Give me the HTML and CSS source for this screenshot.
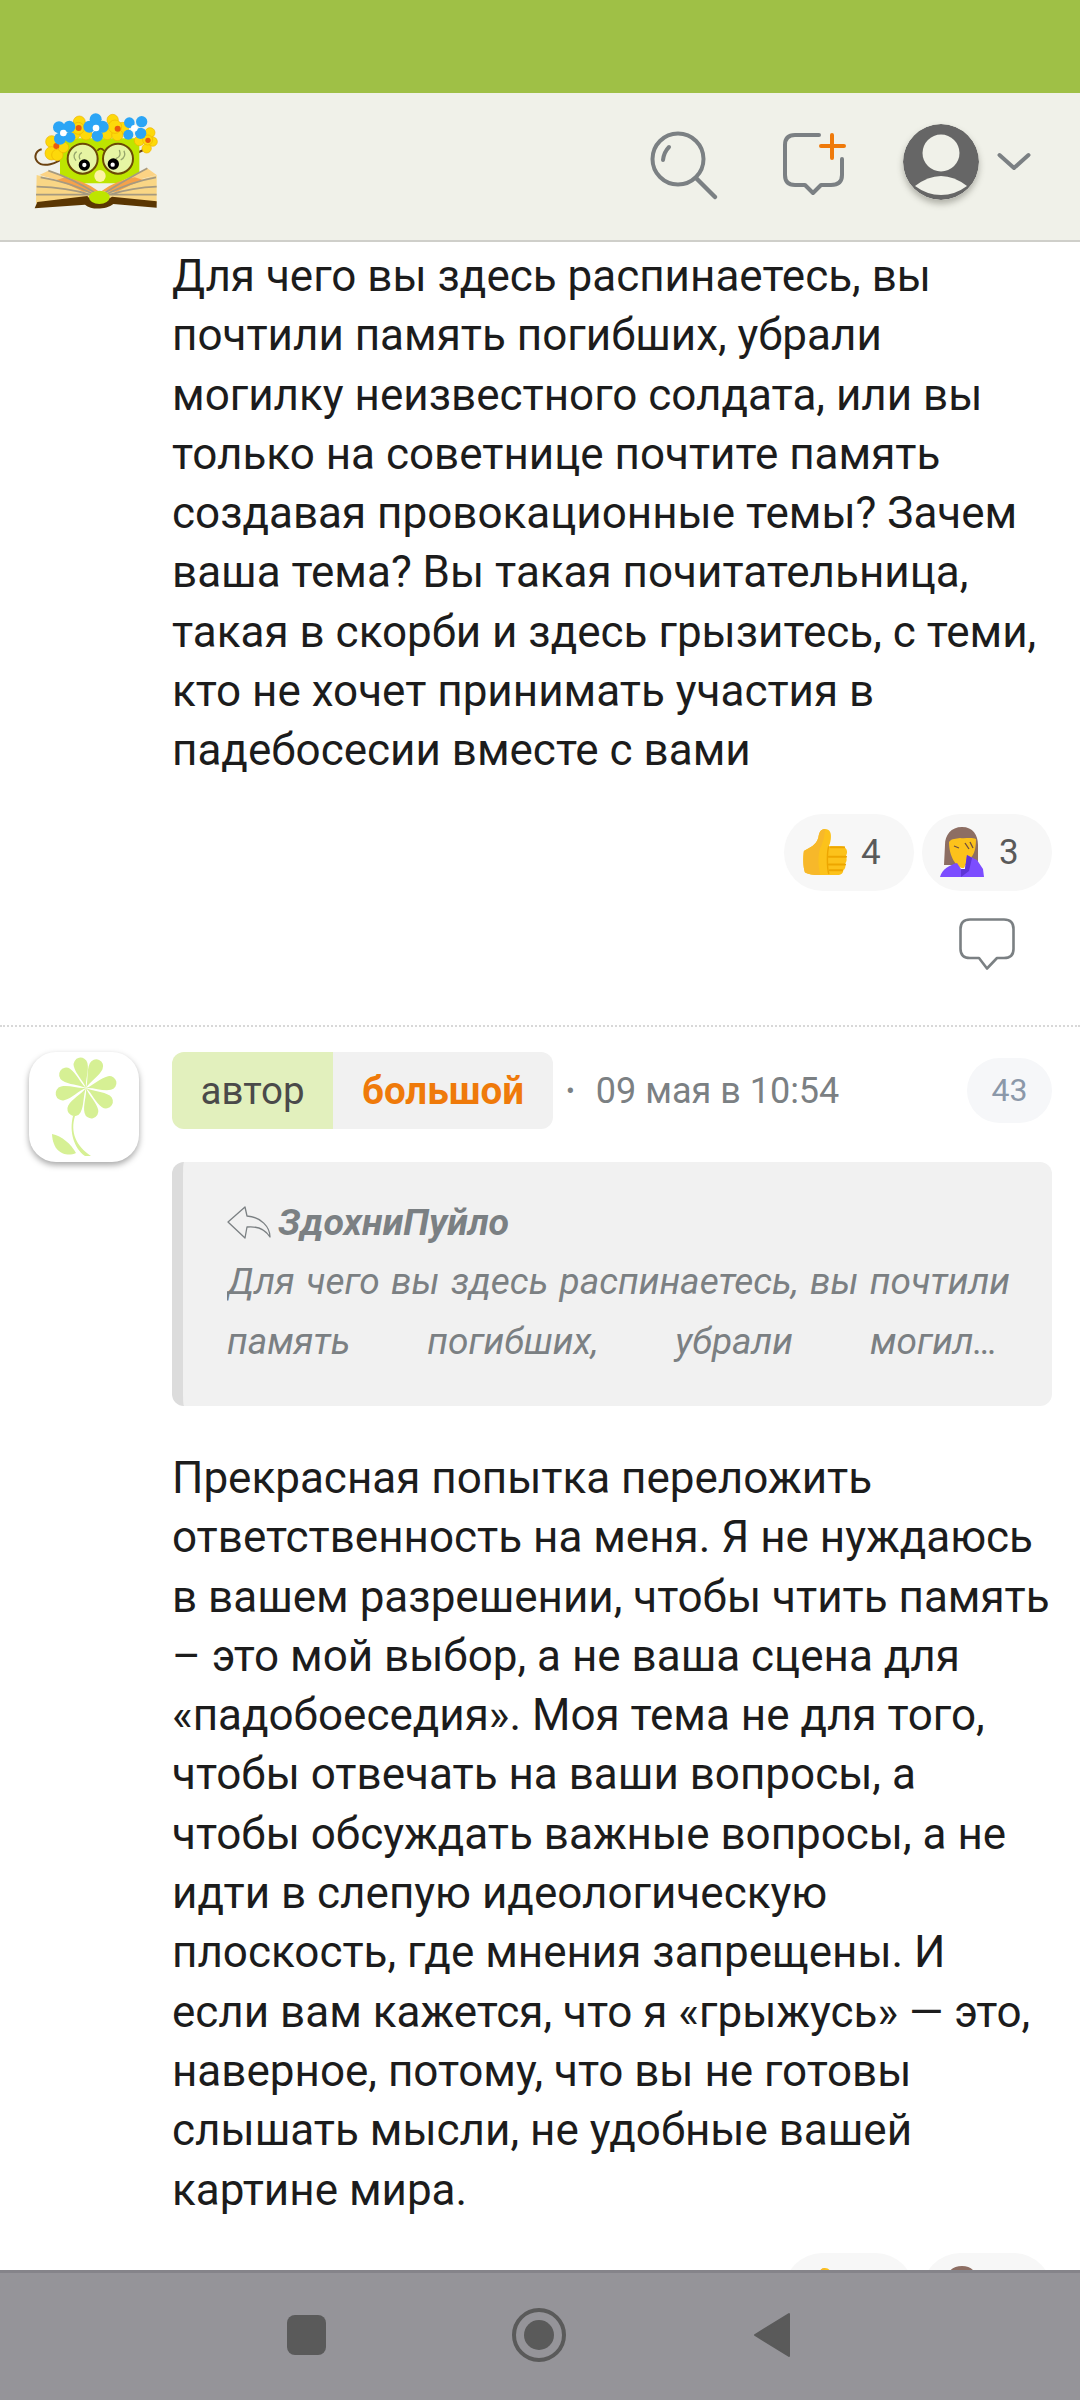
FILE: index.html
```html
<!DOCTYPE html>
<html lang="ru">
<head>
<meta charset="utf-8">
<title>Комментарии</title>
<link rel="stylesheet" href="styles.css">
</head>
<body>
<svg class="defs" width="0" height="0" aria-hidden="true">
  <defs>
    <symbol id="thumb" viewBox="0 0 48 50">
      <path d="M2 24C8 20 15 18 17 10C18 5 19 1 24 1C29 1 31 5 30 12C29.500 15 29 17 28 19L38 19C44 19 47 21 47 25C47 27 46 29 45.500 29.500C47 31 47 35 45 37C46 40 45 43 43 44C43 47 41 49 37 49L20 49C12 49 6 48 3 46C1 40 1 30 2 24Z" fill="#fcc21b"/>
      <path d="M2 24C8 20 15 18 17 10C18 5 19 1 24 1C24 8 22 14 20 19C17 24 16 36 19 49C12 49 6 48 3 46C1 40 1 30 2 24Z" fill="#f7b82a"/>
      <path d="M30 20H44M28 30H46M28 38H45M29 44H42" stroke="#eda600" stroke-width="2" stroke-linecap="round" fill="none"/>
      <path d="M28 19C26 24 26 42 28 48" stroke="#eda600" stroke-width="1.500" fill="none"/>
    </symbol>
    <symbol id="facepalm" viewBox="0 0 46 50">
      <path d="M22 0C11 0 5 8 5 18L4 38H38L38 18C38 8 33 0 22 0Z" fill="#8d6e63"/>
      <path d="M9 15C12 11 16 12 20 11C25 12 31 10 36 12C36 24 33 30 28 33L24 41C17 42 9 30 9 15Z" fill="#fcc21b"/>
      <path d="M14 19L19 21M25 16L29 22M30 15L33 21" stroke="#6d4c41" stroke-width="1.300" fill="none"/>
      <path d="M0 50C2 42 10 38 17 36L21 42L25 42L27 28L37 33L43 42L44 50Z" fill="#7c4dff"/>
      <path d="M21 42L25 42L27 28L32 31L29 44L21 50Z" fill="#5e35d6"/>
    </symbol>
    <symbol id="bubble" viewBox="0 0 56 52">
      <path d="M11 1.500H45Q54.500 1.500 54.500 11V31Q54.500 40 45 40H38L28 50.500L20 40H11Q1.500 40 1.500 31V11Q1.500 1.500 11 1.500Z" fill="none" stroke="#7b8083" stroke-width="2.600" stroke-linejoin="round"/>
    </symbol>
  </defs>
</svg>

<div class="status-bar"></div>

<header class="topbar">
  <svg class="logo" viewBox="90 150 390 300" aria-label="Логотип">
    <path d="M195 290C170 310 130 325 112 305C100 290 108 272 125 268" fill="none" stroke="#6b4210" stroke-width="6"/>
    <path d="M430 270L398 285" stroke="#6b4210" stroke-width="6"/>
    <rect x="180" y="235" width="238" height="135" rx="14" fill="#bde500"/>
    <path d="M300 396L110 345L108 430L300 430Z" fill="#f9d685"/>
    <path d="M300 396L470 345L470 430L300 430Z" fill="#f9d685"/>
    <path d="M145 332C200 350 260 370 300 398C340 370 400 350 442 325L470 345C410 360 350 380 300 410C250 380 170 360 118 345Z" fill="#fcd384"/>
    <path d="M195 352Q255 362 296 394L250 395Q210 375 170 360Z" fill="#f5a24a"/>
    <path d="M404 352Q345 362 304 394L350 395Q390 375 430 360Z" fill="#f5a24a"/>
    <path d="M145 332Q215 355 285 398M122 352Q205 365 280 402M110 380Q200 382 275 405M108 404H270" stroke="#a69a80" stroke-width="5" fill="none"/>
    <path d="M442 325Q385 355 315 398M468 352Q395 365 320 402M470 380Q400 382 325 405M470 404H330" stroke="#a69a80" stroke-width="5" fill="none"/>
    <path d="M104 445L112 426L262 408C272 425 320 425 336 410L470 424V443L340 432C320 448 275 452 255 434Z" fill="#5a3602"/>
    <ellipse cx="298" cy="412" rx="31" ry="20" fill="#bde500"/>
    <ellipse cx="300" cy="348" rx="17" ry="18" fill="#fdf3a4"/>
    <circle cx="248" cy="296" r="45" fill="#e6f5a3" stroke="#6b4a06" stroke-width="6"/>
    <circle cx="354" cy="296" r="45" fill="#e6f5a3" stroke="#6b4a06" stroke-width="6"/>
    <path d="M292 272Q302 260 312 272" fill="none" stroke="#6b4a06" stroke-width="5"/>
    <path d="M228 302C218 290 222 280 230 275M240 298C234 288 240 280 246 278M348 296C362 290 362 282 358 270M362 300C376 292 376 282 372 272" fill="none" stroke="#97a66d" stroke-width="4"/>
    <circle cx="253" cy="315" r="17" fill="#000"/><circle cx="253" cy="315" r="6.500" fill="#fff"/>
    <circle cx="340" cy="312" r="17" fill="#000"/><circle cx="338" cy="314" r="6.500" fill="#fff"/>
    <g fill="#fdd90a" stroke="#efb400" stroke-width="2">
      <circle cx="155" cy="245" r="18"/><circle cx="155" cy="280" r="20"/><circle cx="172" cy="285" r="17"/><circle cx="190" cy="262" r="16"/>
      <circle cx="238" cy="186" r="18"/><circle cx="222" cy="222" r="18"/><circle cx="258" cy="222" r="18"/><circle cx="235" cy="205" r="18"/>
      <circle cx="338" cy="180" r="17"/><circle cx="322" cy="222" r="17"/><circle cx="368" cy="205" r="18"/><circle cx="352" cy="225" r="17"/><circle cx="345" cy="200" r="20"/>
      <circle cx="450" cy="218" r="15"/><circle cx="418" cy="242" r="15"/><circle cx="458" cy="245" r="14"/><circle cx="440" cy="265" r="14"/><circle cx="443" cy="240" r="15"/>
    </g>
    <g fill="#ea5b0c">
      <circle cx="169" cy="258" r="9"/><circle cx="236" cy="204" r="9"/><circle cx="353" cy="206" r="9"/><circle cx="444" cy="241" r="8"/>
    </g>
    <g fill="#2ba5f5">
      <circle cx="177" cy="202" r="18"/><circle cx="208" cy="200" r="18"/><circle cx="180" cy="236" r="18"/><circle cx="210" cy="232" r="16"/>
      <circle cx="287" cy="178" r="18"/><circle cx="268" cy="200" r="18"/><circle cx="308" cy="200" r="18"/><circle cx="292" cy="228" r="17"/>
      <circle cx="388" cy="188" r="16"/><circle cx="425" cy="185" r="17"/><circle cx="385" cy="224" r="15"/><circle cx="422" cy="220" r="17"/>
    </g>
    <g fill="#fff">
      <circle cx="190" cy="219" r="10"/><circle cx="288" cy="204" r="10"/><circle cx="403" cy="205" r="10"/>
    </g>
  </svg>
  <div class="topbar-actions">
    <svg class="icon-search" viewBox="0 0 70 70" aria-label="Поиск">
      <circle cx="28" cy="28" r="25.500" fill="none" stroke="#7b8083" stroke-width="4"/>
      <path d="M47 48L65 66" stroke="#7b8083" stroke-width="4.500" stroke-linecap="round"/>
      <path d="M11 27Q12 19 17 14" stroke="#7b8083" stroke-width="4" stroke-linecap="round" fill="none" transform="translate(2 2)"/>
    </svg>
    <svg class="icon-new" viewBox="0 0 64 64" aria-label="Новая тема">
      <path d="M37 3H13Q3 3 3 13V43Q3 53 13 53H23L31 61L39 53H49Q60 53 60 43V27" fill="none" stroke="#7b8083" stroke-width="4" stroke-linecap="round" stroke-linejoin="round"/>
      <path d="M39 14H62M50 3V26" stroke="#ef7a0a" stroke-width="4" stroke-linecap="round"/>
    </svg>
    <div class="user">
      <svg class="user-pic" viewBox="0 0 76 76" aria-label="Профиль">
        <circle cx="38" cy="38" r="38" fill="#666"/>
        <circle cx="38" cy="29" r="18.500" fill="#f0f1e9"/>
        <path d="M12 62Q38 42 64 62Q52 71 38 71Q24 71 12 62Z" fill="#f0f1e9"/>
      </svg>
      <svg class="chevron" viewBox="0 0 34 20" aria-hidden="true">
        <path d="M2.500 3L17 16L31.500 3" fill="none" stroke="#7b8083" stroke-width="4" stroke-linecap="round" stroke-linejoin="round"/>
      </svg>
    </div>
  </div>
</header>

<main class="feed">
  <article class="post post-first">
    <div class="avatar-space"></div>
    <div class="post-body">
      <p class="post-text">Для чего вы здесь распинаетесь, вы почтили память погибших, убрали могилку неизвестного солдата, или вы только на советнице почтите память создавая провокационные темы? Зачем ваша тема? Вы такая почитательница, такая в скорби и здесь грызитесь, с теми, кто не хочет принимать участия в падебосесии вместе с вами</p>
      <div class="reactions">
        <div class="pill"><svg class="emoji"><use href="#thumb"/></svg><span>4</span></div>
        <div class="pill"><svg class="emoji"><use href="#facepalm"/></svg><span>3</span></div>
      </div>
      <div class="reply-row"><svg class="reply-icon"><use href="#bubble"/></svg></div>
    </div>
  </article>

  <article class="post post-second">
    <div class="avatar">
      <svg viewBox="0 0 110 110" class="avatar-svg" aria-hidden="true">
        <g transform="translate(57 36)" fill="#d6f094">
          <path d="M0 0C-1-8-7-16-7-24A7 7 0 0 1 7-24C7-16 1-8 0 0Z" transform="rotate(-13)"/>
          <path d="M0 0C-1-8-7-16-7-24A7 7 0 0 1 7-24C7-16 1-8 0 0Z" transform="rotate(25)"/>
          <path d="M0 0C-1-8-7-16-7-24A7 7 0 0 1 7-24C7-16 1-8 0 0Z" transform="rotate(78)"/>
          <path d="M0 0C-1-8-7-16-7-24A7 7 0 0 1 7-24C7-16 1-8 0 0Z" transform="rotate(124)"/>
          <path d="M0 0C-1-8-7-16-7-24A7 7 0 0 1 7-24C7-16 1-8 0 0Z" transform="rotate(167)"/>
          <path d="M0 0C-1-8-7-16-7-24A7 7 0 0 1 7-24C7-16 1-8 0 0Z" transform="rotate(209)"/>
          <path d="M0 0C-1-8-7-16-7-24A7 7 0 0 1 7-24C7-16 1-8 0 0Z" transform="rotate(257)"/>
          <path d="M0 0C-1-8-7-16-7-24A7 7 0 0 1 7-24C7-16 1-8 0 0Z" transform="rotate(304)"/>
        </g>
        <path d="M46 64C41 80 47 94 62 104L56 104C45 96 40 80 44 64Z" fill="#d6f094"/>
        <path d="M23 82C33 84 42 92 47 101C38 105 24 102 23 82Z" fill="#d6f094"/>
      </svg>
    </div>
    <div class="post-body">
      <div class="meta">
        <div class="author-tag"><span class="tag-role">автор</span><span class="tag-name">большой</span></div>
        <span class="date"><span class="dot">•</span>09 мая в 10:54</span>
        <span class="num">43</span>
      </div>
      <blockquote class="quote">
        <div class="quote-author">
          <svg class="quote-arrow" viewBox="0 0 44 33" aria-hidden="true">
            <path d="M18 1L1 16L18 32L20 21C30 20 38 23 43 31C43 21 34 11 20 10Z" fill="none" stroke="#7b8083" stroke-width="1.300" stroke-linejoin="round"/>
          </svg>
          <span>ЗдохниПуйло</span>
        </div>
        <div class="quote-text">Для чего вы здесь распинаетесь, вы почтили память погибших, убрали могилку неизвестного солдата, или вы только на советнице почтите память создавая провокационные темы?</div>
      </blockquote>
      <p class="post-text post-text-reply">Прекрасная попытка переложить ответственность на меня. Я не нуждаюсь в вашем разрешении, чтобы чтить память – это мой выбор, а не ваша сцена для «падобоеседия». Моя тема не для того, чтобы отвечать на ваши вопросы, а чтобы обсуждать важные вопросы, а не идти в слепую идеологическую плоскость, где мнения запрещены. И если вам кажется, что я «грыжусь» — это, наверное, потому, что вы не готовы слышать мысли, не удобные вашей картине мира.</p>
      <div class="reactions">
        <div class="pill"><svg class="emoji"><use href="#thumb"/></svg><span>2</span></div>
        <div class="pill"><svg class="emoji"><use href="#facepalm"/></svg><span>1</span></div>
      </div>
    </div>
  </article>
</main>

<nav class="navbar">
  <svg class="nav-square" viewBox="0 0 39 40" aria-label="Недавние"><rect width="39" height="40" rx="8" fill="#5a5a5a"/></svg>
  <svg class="nav-home" viewBox="0 0 54 54" aria-label="Домой"><circle cx="27" cy="27" r="25" fill="none" stroke="#5a5a5a" stroke-width="4"/><circle cx="27" cy="27" r="15" fill="#5a5a5a"/></svg>
  <svg class="nav-back" viewBox="0 0 38 46" aria-label="Назад"><path d="M36 2V44L2 23Z" fill="#5a5a5a" stroke="#5a5a5a" stroke-width="2" stroke-linejoin="round"/></svg>
</nav>
</body>
</html>
```

FILE: styles.css
```css
* { box-sizing: border-box; }
html, body { margin: 0; padding: 0; }
body {
  width: 1080px;
  height: 2400px;
  display: flex;
  flex-direction: column;
  overflow: hidden;
  background: #fff;
  font-family: Roboto, "Noto Sans", sans-serif;
  color: #1c1c1c;
}
.defs { position: absolute; }

.status-bar { height: 93px; background: #9fc046; flex: none; }

.topbar {
  height: 149px;
  flex: none;
  display: flex;
  justify-content: space-between;
  align-items: flex-start;
  background: #f0f1e9;
  border-bottom: 2px solid #cfcfca;
  padding: 17px 49px 0 30px;
}
.logo { width: 130px; height: 100px; }
.topbar-actions { display: flex; align-items: flex-start; }
.icon-search { width: 70px; height: 70px; margin: 21px 0 0 0; display: block; }
.icon-new { width: 64px; height: 64px; margin: 22px 0 0 62px; display: block; }
.user { display: flex; align-items: center; margin: 14px 0 0 57px; }
.user-pic { width: 76px; height: 76px; display: block; border-radius: 50%; box-shadow: 0 4px 6px rgba(60, 60, 50, .35); }
.chevron { width: 34px; height: 20px; margin-left: 18px; display: block; }

.feed { flex: 1; min-height: 0; overflow: hidden; padding-top: 5px; }
.post { display: flex; padding: 0 28px 0 29px; gap: 33px; }
.avatar-space { width: 110px; flex: none; }
.post-body { width: 880px; flex: none; }
.post-first { height: 780px; border-bottom: 2px dotted #d8d8d8; }
.post-second { padding-top: 25px; }

.post-text { margin: 0; font-size: 44px; line-height: 59.3px; }
.post-text-reply { margin-top: 43px; }

.reactions { display: flex; justify-content: flex-end; gap: 8px; margin-top: 33px; }
.pill {
  width: 130px;
  height: 77px;
  border-radius: 39px;
  background: #f7f7f7;
  display: flex;
  align-items: center;
  gap: 13px;
  padding-left: 18px;
  font-size: 35px;
  color: #5a5a5a;
}
.emoji { width: 46px; height: 50px; flex: none; }
.reply-row { display: flex; justify-content: flex-end; margin-top: 27px; padding-right: 37px; }
.reply-icon { width: 56px; height: 52px; display: block; }

.avatar {
  width: 110px;
  height: 110px;
  flex: none;
  border-radius: 27px;
  background: #fff;
  box-shadow: 0 3px 6px rgba(0, 0, 0, .35);
}
.avatar-svg { width: 110px; height: 110px; display: block; }

.meta { display: flex; align-items: center; height: 77px; }
.author-tag { display: flex; height: 77px; border-radius: 12px; overflow: hidden; font-size: 38.500px; line-height: 77px; }
.tag-role { width: 161px; text-align: center; background: #e2f0bd; color: #4a4a4a; }
.tag-name { width: 220px; text-align: center; background: #f1f1f1; color: #ef7a0a; font-weight: 700; }
.date { margin-left: 13px; font-size: 36px; color: #7b8083; }
.dot { margin-right: 21px; font-size: 26px; vertical-align: 3px; }
.num {
  margin-left: auto;
  width: 85px;
  height: 65px;
  border-radius: 33px;
  background: #f6f7f9;
  color: #8b98a9;
  font-size: 32px;
  line-height: 65px;
  text-align: center;
}

.quote {
  margin: 33px 0 0;
  height: 244px;
  border-radius: 12px;
  background: #f1f1f1;
  border-left: 11px solid #dcdcdc;
  padding: 31px 42px 0 44px;
  color: #7b8083;
  font-style: italic;
  font-size: 37px;
  line-height: 59.500px;
}
.quote-author { display: flex; align-items: center; gap: 7px; font-weight: 700; height: 59px; font-size: 37.500px; }
.quote-arrow { width: 44px; height: 33px; flex: none; }
.quote-text {
  display: -webkit-box;
  -webkit-box-orient: vertical;
  -webkit-line-clamp: 2;
  overflow: hidden;
  text-align: justify;
}

.navbar {
  height: 130px;
  flex: none;
  background: #959499;
  border-top: 3px solid #85848a;
  display: flex;
  align-items: center;
  padding: 0 0 4px 287px;
}
.nav-square { width: 39px; height: 40px; display: block; }
.nav-home { width: 54px; height: 54px; margin-left: 186px; display: block; }
.nav-back { width: 38px; height: 46px; margin-left: 187px; display: block; }
```
